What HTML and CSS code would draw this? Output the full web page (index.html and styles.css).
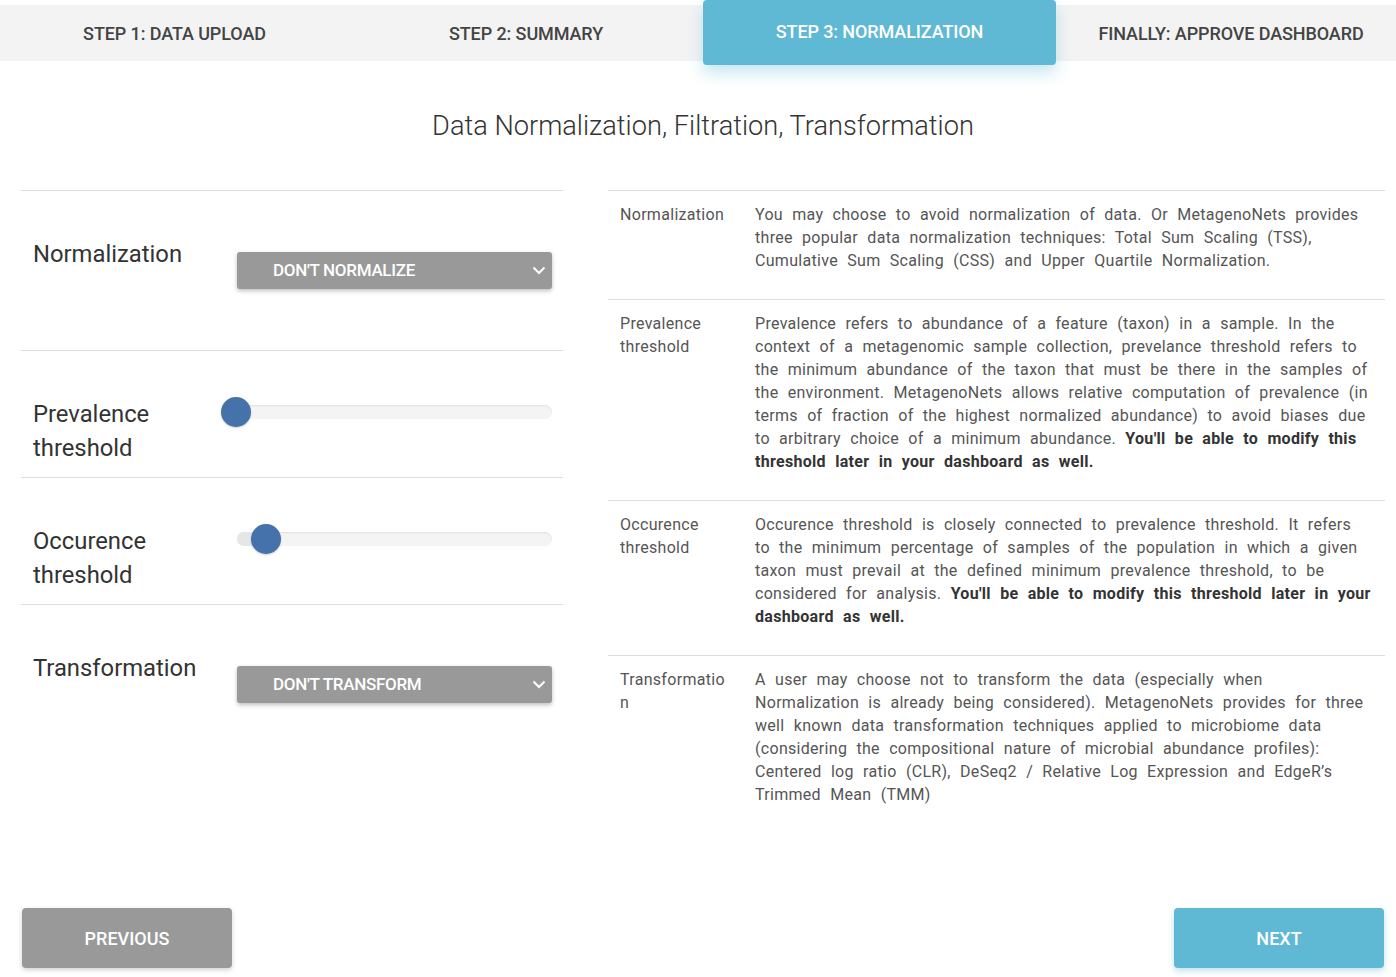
FILE: index.html
```html
<!DOCTYPE html>
<html lang="en">
<head>
<meta charset="utf-8">
<title>Normalization</title>
<link rel="stylesheet" href="styles.css">
</head>
<body>
<nav class="steps">
  <div class="step">STEP 1: DATA UPLOAD</div>
  <div class="step">STEP 2: SUMMARY</div>
  <div class="step active">STEP 3: NORMALIZATION</div>
  <div class="step last">FINALLY: APPROVE DASHBOARD</div>
</nav>

<h1 class="title">Data Normalization, Filtration, Transformation</h1>

<main class="content">
  <section class="controls">
    <div class="crow first">
      <div class="clabel">Normalization</div>
      <div class="cctl sel-wrap">
        <div class="select">DON'T NORMALIZE
          <svg class="chev" width="14" height="9" viewBox="0 0 14 9"><path d="M1.5 1.5 L7 7 L12.5 1.5" fill="none" stroke="#fff" stroke-width="2"/></svg>
        </div>
      </div>
    </div>
    <div class="crow">
      <div class="clabel">Prevalence<br>threshold</div>
      <div class="cctl slider-wrap">
        <div class="track"><span class="fill" style="width:0px"></span><span class="thumb" style="left:0px"></span></div>
      </div>
    </div>
    <div class="crow">
      <div class="clabel">Occurence<br>threshold</div>
      <div class="cctl slider-wrap">
        <div class="track"><span class="fill" style="width:30px"></span><span class="thumb" style="left:30px"></span></div>
      </div>
    </div>
    <div class="crow last">
      <div class="clabel">Transformation</div>
      <div class="cctl sel-wrap">
        <div class="select">DON'T TRANSFORM
          <svg class="chev" width="14" height="9" viewBox="0 0 14 9"><path d="M1.5 1.5 L7 7 L12.5 1.5" fill="none" stroke="#fff" stroke-width="2"/></svg>
        </div>
      </div>
    </div>
  </section>

  <section class="info">
    <div class="irow">
      <div class="iname">Normalization</div>
      <div class="idesc"><p>You may choose to avoid normalization of data. Or MetagenoNets provides three popular data normalization techniques: Total Sum Scaling (TSS), Cumulative Sum Scaling (CSS) and Upper Quartile Normalization.</p></div>
    </div>
    <div class="irow">
      <div class="iname">Prevalence threshold</div>
      <div class="idesc"><p>Prevalence refers to abundance of a feature (taxon) in a sample. In the context of a metagenomic sample collection, prevelance threshold refers to the minimum abundance of the taxon that must be there in the samples of the environment. MetagenoNets allows relative computation of prevalence (in terms of fraction of the highest normalized abundance) to avoid biases due to arbitrary choice of a minimum abundance. <b>You'll be able to modify this threshold later in your dashboard as well.</b></p></div>
    </div>
    <div class="irow">
      <div class="iname">Occurence threshold</div>
      <div class="idesc"><p>Occurence threshold is closely connected to prevalence threshold. It refers to the minimum percentage of samples of the population in which a given taxon must prevail at the defined minimum prevalence threshold, to be considered for analysis. <b>You'll be able to modify this threshold later in your dashboard as well.</b></p></div>
    </div>
    <div class="irow">
      <div class="iname">Transformation</div>
      <div class="idesc"><p>A user may choose not to transform the data (especially when Normalization is already being considered). MetagenoNets provides for three well known data transformation techniques applied to microbiome data (considering the compositional nature of microbial abundance profiles): Centered log ratio (CLR), DeSeq2 / Relative Log Expression and EdgeR’s Trimmed Mean (TMM)</p></div>
    </div>
  </section>
</main>

<footer class="nav-buttons">
  <button class="btn prev">PREVIOUS</button>
  <button class="btn next">NEXT</button>
</footer>
</body>
</html>
```

FILE: styles.css
```css
* { box-sizing: border-box; }
html, body { margin: 0; padding: 0; }
body {
  width: 1396px;
  height: 977px;
  overflow: hidden;
  background: #fff;
  font-family: Roboto, "Liberation Sans", Arial, sans-serif;
  color: #444;
  position: relative;
}

.steps {
  display: grid;
  grid-template-columns: 349px 354px 353px 340px;
  height: 56px;
  margin-top: 5px;
  background: #f3f3f3;
}
.step {
  display: flex;
  align-items: center;
  justify-content: center;
  font-size: 18px;
  font-weight: 500;
  color: #444;
  letter-spacing: -0.1px;
  padding-bottom: 3px;
}
.step.last { padding-left: 10px; }
.step.active {
  margin-top: -5px;
  height: 65px;
  background: #5fb8d4;
  color: #fff;
  border-radius: 4px;
  box-shadow: 0 8px 16px rgba(95, 184, 212, 0.35);
  position: relative;
  z-index: 1;
  padding-bottom: 3px;
}

.title {
  margin: 48px 0 0;
  padding-left: 10px;
  text-align: center;
  font-size: 27.2px;
  font-weight: 300;
  color: #333;
  line-height: 34px;
  height: 34px;
}

.content {
  display: flex;
  margin-top: 47px;
  padding-left: 21px;
  gap: 45px;
}

.controls {
  width: 542px;
  flex: none;
}
.crow {
  display: flex;
  border-top: 1px solid #ddd;
  padding: 46px 0 12px 12px;
}
.crow.first { height: 160px; }
.clabel {
  width: 204px;
  flex: none;
  font-size: 23.8px;
  line-height: 34px;
  color: #333;
}
.cctl { width: 315px; flex: none; }
.sel-wrap { padding-top: 15px; }
.select {
  height: 37px;
  background: #999;
  border-radius: 3px;
  box-shadow: 0 2px 4px rgba(0,0,0,0.25);
  color: #fff;
  font-size: 17px;
  font-weight: 500;
  line-height: 37px;
  padding-left: 36px;
  position: relative;
  letter-spacing: -0.3px;
}
.chev { position: absolute; right: 6px; top: 14px; }

.slider-wrap { padding-top: 8px; }
.track {
  position: relative;
  height: 14px;
  border-radius: 7px;
  background: #f4f4f4;
  box-shadow: inset 0 1px 2px rgba(0,0,0,0.08);
}
.fill {
  position: absolute;
  left: 0; top: 0; bottom: 0;
  border-radius: 7px;
  background: #e6e6e6;
}
.thumb {
  position: absolute;
  top: -8px;
  width: 30px;
  height: 30px;
  margin-left: -16px;
  border-radius: 50%;
  background: #4572aa;
  box-shadow: 0 1px 2px rgba(0,0,0,0.2);
}

.info {
  width: 777px;
  flex: none;
}
.irow {
  display: grid;
  grid-template-columns: 135px 1fr;
  border-top: 1px solid #ddd;
  padding-top: 12px;
}
.iname {
  padding: 0 12px;
  font-size: 16px;
  line-height: 23px;
  color: #555;
  letter-spacing: 0.3px;
  overflow-wrap: anywhere;
}
.idesc {
  padding: 0 12px;
  font-size: 16px;
  line-height: 23px;
  color: #555;
  letter-spacing: 0.3px;
  word-spacing: 5px;
}
.idesc p { margin: 0 0 27px; }
.idesc b { color: #333; font-weight: 700; }

.nav-buttons {
  position: absolute;
  left: 22px;
  right: 12px;
  top: 908px;
  display: flex;
  justify-content: space-between;
}
.btn {
  width: 210px;
  height: 60px;
  border: none;
  border-radius: 4px;
  color: #fff;
  font-family: Roboto, "Liberation Sans", Arial, sans-serif;
  font-size: 18px;
  font-weight: 500;
  box-shadow: 0 2px 5px rgba(0,0,0,0.18);
}
.btn.prev { background: #999; }
.btn.next { background: #5fb8d4; box-shadow: 0 3px 6px rgba(95,184,212,0.4); }
```
